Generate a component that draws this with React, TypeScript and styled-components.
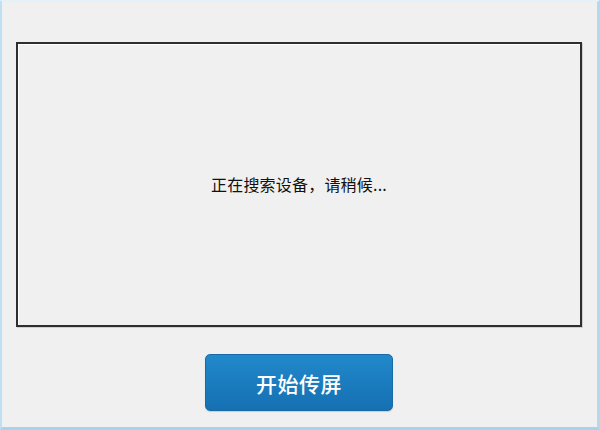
import React from "react";
import styled, { createGlobalStyle } from "styled-components";

const Global = createGlobalStyle`
  html, body { margin: 0; padding: 0; background: #f0f0f0; }
  body { font-family: "Microsoft YaHei", "Noto Sans CJK SC", "Noto Sans", sans-serif; }
`;

const Window = styled.div`
  box-sizing: border-box;
  width: 600px;
  height: 430px;
  background: #f0f0f0;
  border-left: 2px solid #bfe0f2;
  border-right: 3px solid #b3d9ef;
  border-bottom: 3px solid #a8d3ec;
  border-top: 2px solid #e4f1f9;
  display: flex;
  flex-direction: column;
  align-items: center;
  padding: 40px 16px 0 15px;
`;

const StatusBox = styled.div`
  box-sizing: border-box;
  width: 566px;
  height: 285px;
  border: 2px solid #2e2e2e;
  box-shadow: 1px 1px 0 #cfcfcf, inset 1px 1px 0 #ffffff;
  display: flex;
  align-items: center;
  justify-content: center;
  padding-bottom: 2px;
`;

const StatusText = styled.span`
  font-family: "Noto Sans CJK SC", sans-serif;
  font-size: 16px;
  font-weight: 400;
  color: #111;
  letter-spacing: 0.2px;
`;

const StartButton = styled.button`
  margin-top: 27px;
  width: 188px;
  height: 57px;
  border: 1px solid #1a6aa8;
  border-radius: 5px;
  background: linear-gradient(#2189cb, #1a7bbd 55%, #1670b2);
  box-shadow: 0 1px 1px rgba(0, 0, 0, 0.15);
  color: #ffffff;
  font-family: "Noto Sans CJK SC", sans-serif;
  font-size: 21px;
  font-weight: 500;
  letter-spacing: 0.5px;
  cursor: pointer;
  padding: 0;
`;

export default function App() {
  return (
    <>
      <Global />
      <Window>
        <StatusBox>
          <StatusText>正在搜索设备，请稍候...</StatusText>
        </StatusBox>
        <StartButton>开始传屏</StartButton>
      </Window>
    </>
  );
}
